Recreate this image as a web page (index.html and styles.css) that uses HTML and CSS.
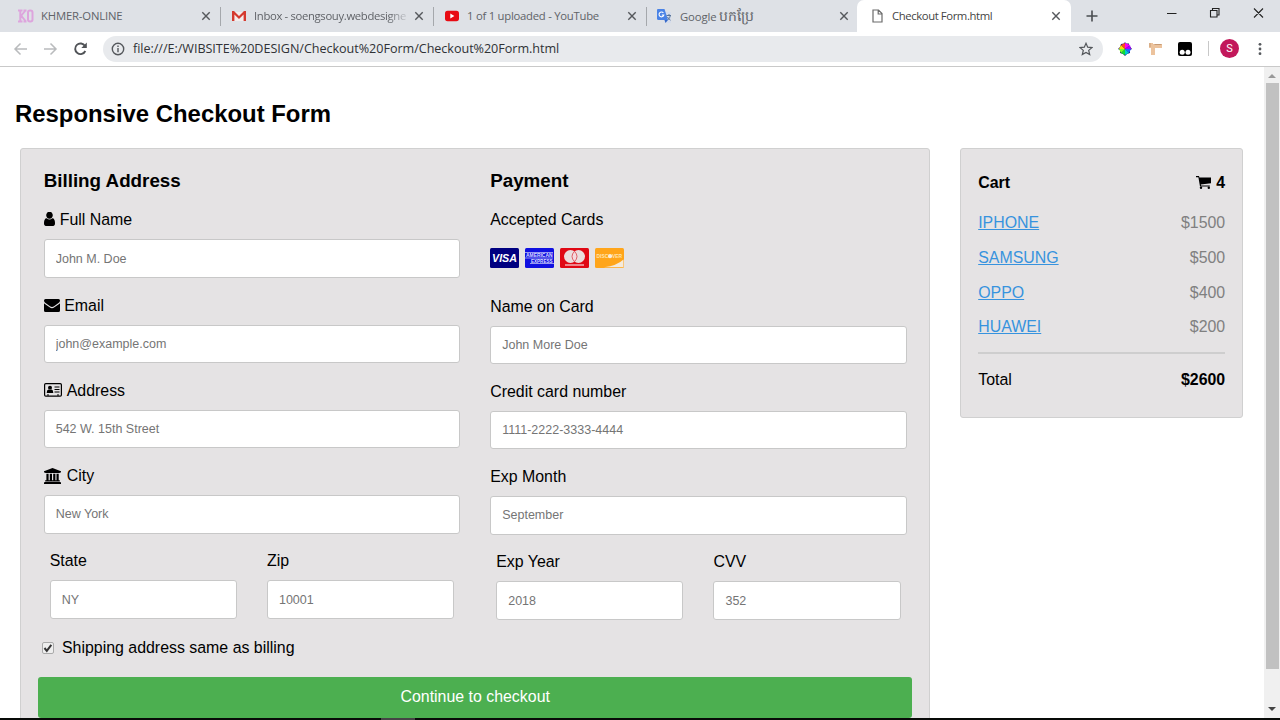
FILE: index.html
```
<!DOCTYPE html>
<html lang="en">
<head>
<meta charset="utf-8">
<title>Checkout Form.html</title>
<link rel="stylesheet" href="styles.css">
</head>
<body>
<div class="window">
  <header class="tabs">
    <div class="tab tab-1"><svg class="fav" width="16" height="16" viewBox="0 0 16 16"><g fill="none" stroke="#dda5dd" stroke-width="2"><path d="M0 2.500h4.500M0 13.500h4.500M2.300 2v12M5.500 2.500h3M5.500 13.500h3M3 8l4-5M3.500 8l4 5"/><rect x="10" y="2.500" width="4.500" height="11" rx="2"/></g></svg><span class="tab-title t1">KHMER-ONLINE</span><svg class="close" viewBox="0 0 10 10"><path d="M1.300 1.300l7.400 7.400M8.700 1.300L1.300 8.700"/></svg></div>
    <div class="tab tab-2"><svg class="fav" width="14" height="16" viewBox="0 0 14 16"><path fill="#f3eded" d="M1 4h12v9H1z"/><path fill="#d43a2f" d="M0 3h2l5 5 5-5h2v10h-2.400V6.400L7 11 2.400 6.400V13H0z"/></svg><span class="tab-title t2 fade">Inbox - soengsouy.webdesigne</span><svg class="close" viewBox="0 0 10 10"><path d="M1.300 1.300l7.400 7.400M8.700 1.300L1.300 8.700"/></svg></div>
    <div class="tab tab-3"><svg class="fav" width="14" height="16" viewBox="0 0 14 16"><rect y="2.700" width="14" height="10.500" rx="2.600" fill="#e80b13"/><path fill="#fff" d="M5.300 5.600v4.800L9.400 8z"/></svg><span class="tab-title t3">1 of 1 uploaded - YouTube</span><svg class="close" viewBox="0 0 10 10"><path d="M1.300 1.300l7.400 7.400M8.700 1.300L1.300 8.700"/></svg></div>
    <div class="tab tab-4"><svg class="fav" width="15" height="16" viewBox="0 0 15 16"><path fill="#d5dceb" d="M6 4h8v11H8z"/><path fill="#4a83e6" d="M1 1h6.500L11 12H1.500Q0 12 0 10.500V2q0-1 1-1z"/><path fill="#3367c9" d="M7.500 12H11l-2.500 3z"/><path d="M6.400 5A2.400 2.400 0 1 0 6.800 7H4.800" fill="none" stroke="#fff" stroke-width="1.100"/><path d="M9.500 7.500h4.500M12 6v1.500M13.200 8c-.5 2-1.500 3-2.400 4M10.500 9c1 1.800 2 2.500 3 3.200" fill="none" stroke="#5b7699"/></svg><span class="tab-title t4">Google <span class="khmer">បកប្រែ</span></span><svg class="close" viewBox="0 0 10 10"><path d="M1.300 1.300l7.400 7.400M8.700 1.300L1.300 8.700"/></svg></div>
    <div class="tab tab-5"><svg class="fav" width="11" height="16" viewBox="0 0 11 16"><path d="M1 2h5.500L10 5.500V14H1zM6.200 2v4H10" fill="#fff" stroke="#6b6b6b" stroke-width="1.200"/></svg><span class="tab-title t5">Checkout Form.html</span><svg class="close" viewBox="0 0 10 10"><path d="M1.300 1.300l7.400 7.400M8.700 1.300L1.300 8.700"/></svg></div>
    <svg class="plus" width="12" height="12" viewBox="0 0 12 12"><path d="M6 .5v11M.5 6h11" stroke="#4a4d51" stroke-width="1.600"/></svg>
    <svg class="controls" width="98" height="12" viewBox="0 0 98 12" fill="none" stroke="#222" stroke-width="1.100"><path d="M1 6.500h9.500M44.500 3.500h6.500v6.500h-6.500zM46.500 3.500v-2h6.500v6.500h-2M88 1.500l9 9M97 1.500l-9 9"/></svg>
  </header>
  <nav class="toolbar">
    <svg class="nav-icons" width="78" height="16" viewBox="0 0 78 16" fill="none" stroke-width="1.500"><g stroke="#b9bbbd"><path d="M14 8H2.500M7.500 2.500L2 8l5.500 5.500M31 8h11.500M37.500 2.500L43 8l-5.500 5.500"/></g><path d="M72 5A5.300 5.300 0 1 0 72.300 10" stroke="#505357" stroke-width="1.900"/><path d="M73.800 1.500v5.500h-5.500z" fill="#505357"/></svg>
    <div class="address">
      <svg width="14" height="14" viewBox="0 0 14 14"><circle cx="7" cy="7" r="5.700" fill="none" stroke="#55585c" stroke-width="1.400"/><path d="M7 6v4.200M7 3.600v1.400" stroke="#55585c" stroke-width="1.400"/></svg>
      <span class="url">file:///E:/WIBSITE%20DESIGN/Checkout%20Form/Checkout%20Form.html</span>
      <svg class="star" width="14" height="14" viewBox="0 0 14 14"><path d="M7 1.300l1.700 3.900 4.200.4-3.200 2.800 1 4.200L7 10.400l-3.700 2.200 1-4.200L1.100 5.600l4.200-.4z" fill="none" stroke="#53565a" stroke-width="1.200"/></svg>
    </div>
    <svg class="ext wheel" width="14" height="14" viewBox="0 0 14 14"><path fill="#181878" d="M7 0l1 1.500h3v2l3 3.500-2 1v3l-3 1-2 2-2-2-3-1V8L0 7l2-2 1-3 3-.5z"/><path fill="#f0e" d="M7 7L7 1l5 2z"/><path fill="#a0f" d="M7 7l5-4 1 4z"/><path fill="#26f" d="M7 7h6l-2 4z"/><path fill="#0cc" d="M7 7l4 4-4 2z"/><path fill="#1d3" d="M7 7v6l-4-2z"/><path fill="#7f2" d="M7 7l-4 4-2-4z"/><path fill="#fd0" d="M7 7H1l2-4z"/><path fill="#f42" d="M7 7L3 3l4-2z"/></svg>
    <svg class="ext square" width="13" height="12" viewBox="0 0 13 12"><path fill="#ecc39d" d="M0 0h4v1h9v4H6v7H2V5H0z"/><path d="M1 0v4M5.500 1.500h7" stroke="#c79b75" fill="none"/></svg>
    <svg class="ext monkey" width="14" height="14" viewBox="0 0 14 14"><rect width="14" height="14" rx="2"/><circle cx="4.200" cy="10.300" r="2.500" fill="#fff"/><circle cx="10" cy="10.300" r="2.500" fill="#fff"/></svg>
    <span class="divider"></span><span class="avatar">S</span>
    <svg class="dots" width="4" height="14" viewBox="0 0 4 14" fill="#55585c"><circle cx="2" cy="2.300" r="1.400"/><circle cx="2" cy="7" r="1.400"/><circle cx="2" cy="11.700" r="1.400"/></svg>
  </nav>
  <div class="viewport">
    <main class="page">
      <h1>Responsive Checkout Form</h1>
      <div class="content">
        <form class="panel checkout">
          <div class="columns">
            <section class="column">
              <h2>Billing Address</h2>
              <div class="field"><label><svg class="user" width="11" height="14" viewBox="0 160 1280 1504" preserveAspectRatio="none"><path d="M1280 1399q0 109-62.500 187t-150.500 78h-854q-88 0-150.500-78t-62.500-187q0-85 8.500-160.500t31.500-152t58.500-131t94-89t134.500-34.500q131 128 313 128t313-128q76 0 134.500 34.500t94 89t58.500 131t31.500 152t8.500 160.500zM1024 512q0 159-112.500 271.500t-271.500 112.500t-271.500-112.500t-112.500-271.500t112.500-271.500t271.500-112.500t271.500 112.500t112.500 271.500z"/></svg><span>Full Name</span></label><input type="text" placeholder="John M. Doe"></div>
              <div class="field"><label class="mail"><svg width="16" height="13" viewBox="0 0 16 13"><path d="M0 1.500Q0 0 1.500 0h13Q16 0 16 1.500 16 3 14.500 4L10 7.200Q8 8.700 6 7.200L1.500 4Q0 3 0 1.500zM0 4.200q.5.500 1.200 1L5.600 8.300q2.400 1.700 4.800 0l4.400-3.100q.7-.5 1.200-1v7.300q0 1.500-1.500 1.500h-13Q0 13 0 11.500z"/></svg><span>Email</span></label><input type="text" placeholder="john@example.com"></div>
              <div class="field"><label><svg width="18" height="14" viewBox="0 0 18 14"><rect x=".6" y=".6" width="16.800" height="12.500" rx="1.200" fill="none" stroke="#000" stroke-width="1.200"/><circle cx="6" cy="4.800" r="2"/><path d="M2.700 10q0-3 1.800-3.400 1.500 1 3 0Q9.300 7 9.300 10z"/><path d="M10.500 4h5M10.500 6.500h5M10.500 9h5M3 12h2M13 12h2" stroke="#000" stroke-width="1.100"/></svg><span>Address</span></label><input type="text" placeholder="542 W. 15th Street"></div>
              <div class="field"><label class="city"><svg width="17" height="16" viewBox="0 0 17 16"><path d="M8.500 0L17 3.300v1.200h-1.200v.6H1.200v-.6H0V3.300zM2.400 5.700h2.200v6.600h1.200V5.700H8v6.600h1.200V5.700h2.200v6.600h1.100V5.700h2.200v6.600h1.100v1.200H1.200v-1.200h1.200zM.6 14h15.800l.6.700V16H0v-1.300z"/></svg><span>City</span></label><input type="text" placeholder="New York"></div>
              <div class="pair"><div class="field"><label>State</label><input type="text" placeholder="NY"></div><div class="field"><label>Zip</label><input type="text" placeholder="10001"></div></div>
            </section>
            <section class="column">
              <h2>Payment</h2>
              <div class="accepted"><label>Accepted Cards</label>
                <div class="cards">
                  <svg viewBox="0 0 29 20"><rect width="29" height="20" rx="1.500" fill="#000080"/><text class="visa" x="2" y="14.300" textLength="25" lengthAdjust="spacingAndGlyphs">VISA</text></svg>
                  <svg viewBox="0 0 29 20"><rect width="29" height="20" rx="1.500" fill="#1010e0"/><text class="amex" x="1" y="9.300" textLength="26.500" lengthAdjust="spacingAndGlyphs">AMERICAN</text><text class="amex" x="6" y="15" textLength="21.500" lengthAdjust="spacingAndGlyphs">EXPRESS</text><path d="M0 4.500h28M0 10h28M5 15.500h24" stroke="#d4d4f8" stroke-width=".7"/></svg>
                  <svg viewBox="0 0 29 20"><rect width="29" height="20" rx="1.500" fill="#e00814"/><circle cx="10.500" cy="8.500" r="6.500" fill="#eadede"/><circle cx="18.500" cy="8.500" r="6.500" fill="#eadede"/><path d="M14.500 3.300q-5 5.200 0 10.400 5-5.200 0-10.400z" fill="#f5d8dc" stroke="#d9404a" stroke-width=".8"/><path d="M5 17h19" stroke="#f3aeb3" stroke-width="1.500"/></svg>
                  <svg viewBox="0 0 29 20"><rect width="29" height="20" rx="1.500" fill="#ffa51a"/><path d="M28.500 11.500v7.700H9q13-1.500 19.500-7.700z" fill="#f4eadc"/><text class="disc" x="1.500" y="10" textLength="25.500" lengthAdjust="spacingAndGlyphs">DISCOVER</text><circle cx="15" cy="8.200" r="2" fill="#f9eddb"/></svg>
                </div>
              </div>
              <div class="field"><label>Name on Card</label><input type="text" placeholder="John More Doe"></div>
              <div class="field"><label>Credit card number</label><input type="text" placeholder="1111-2222-3333-4444"></div>
              <div class="field"><label>Exp Month</label><input type="text" placeholder="September"></div>
              <div class="pair"><div class="field"><label>Exp Year</label><input type="text" placeholder="2018"></div><div class="field"><label>CVV</label><input type="text" placeholder="352"></div></div>
            </section>
          </div>
          <label class="same"><svg width="12" height="12" viewBox="0 0 12 12"><rect x=".5" y=".5" width="11" height="11" rx="1.500" fill="#eee" stroke="#aaa"/><path d="M2.500 6l2.300 2.800L9.300 2.800" fill="none" stroke="#333" stroke-width="2"/></svg><span>Shipping address same as billing</span></label>
          <button type="button" class="submit">Continue to checkout</button>
        </form>
        <aside class="panel cart">
          <div class="row head"><b>Cart</b><b class="count"><svg width="15" height="13" viewBox="0 0 15 13"><path d="M0 0h3l.4 1.500H15V7.200L4.800 8.500l.2 1h8.800v1H4L2.400 1.200H0z"/><circle cx="5" cy="11.800" r="1.200"/><circle cx="12.800" cy="11.800" r="1.200"/></svg>4</b></div>
          <div class="row"><a href="#">IPHONE</a><span>$1500</span></div>
          <div class="row"><a href="#">SAMSUNG</a><span>$500</span></div>
          <div class="row"><a href="#">OPPO</a><span>$400</span></div>
          <div class="row"><a href="#">HUAWEI</a><span>$200</span></div>
          <hr>
          <div class="row total"><span>Total</span><b>$2600</b></div>
        </aside>
      </div>
    </main>
    <div class="scrollbar"><svg width="8" height="4" viewBox="0 0 8 4"><path d="M0 4l4-4 4 4z" fill="#999"/></svg><div class="thumb"></div><svg class="down" width="8" height="4" viewBox="0 0 8 4"><path d="M0 0h8L4 4z" fill="#444"/></svg></div>
  </div>
  <footer class="taskbar"><div class="task"></div></footer>
</div>
</body>
</html>
```
FILE: styles.css
```
* { box-sizing: border-box; }
body { margin: 0; overflow: hidden; background: #fff; color: #000; font: 15.92px/19px "Liberation Sans", sans-serif; }
svg { display: block; flex: none; }
.window { width: 1280px; height: 720px; display: flex; flex-direction: column; overflow: hidden; }
.tabs { height: 32px; flex: none; display: flex; background: #dee1e6; }
.tab { display: flex; align-items: center; height: 32px; font: 11.3px/16px "Open Sans", "Noto Sans", sans-serif; color: #606368; white-space: nowrap; }
.tab-1 { width: 220px; padding: 0 9px 0 18px; gap: 7px; }
.tab-2 { width: 213px; padding: 0 9px 0 12px; gap: 8px; }
.tab-3 { width: 213px; padding: 0 9px 0 12px; gap: 8px; }
.tab-4 { width: 211px; padding: 0 8px 0 11px; gap: 8px; }
.tab-2, .tab-3, .tab-4 { background: linear-gradient(#a5a8ac, #a5a8ac) 0 7px / 1px 19px no-repeat; }
.tab-5 { width: 214px; padding: 0 10px 0 15px; gap: 9px; background: #fff; border-radius: 7px 7px 0 0; color: #444; }
.tab-title { flex: 1; min-width: 0; }
.t1 { letter-spacing: -.17px; }
.t2 { letter-spacing: -.34px; }
.t3 { letter-spacing: -.25px; }
.t4 { letter-spacing: -.1px; }
.t5 { letter-spacing: -.4px; }
.khmer { letter-spacing: 0; font-size: 14px; line-height: 16px; }
.fade { -webkit-mask-image: linear-gradient(90deg, #000 88%, rgba(0,0,0,.2)); mask-image: linear-gradient(90deg, #000 88%, rgba(0,0,0,.2)); }
.close { width: 10px; height: 10px; stroke: #55585c; stroke-width: 1.4; }
.plus { margin: 10px 0 0 15px; }
.controls { margin: 7px 0 0 68px; }
.toolbar { height: 35px; flex: none; display: flex; align-items: center; padding: 0 0 1px 13px; border-bottom: 1px solid #c9c9c9; }
.address { width: 1000px; height: 26px; margin-left: 12px; padding: 0 10px 0 8px; border-radius: 13px; background: #e8eaed; display: flex; align-items: center; }
.url { margin-left: 8px; flex: 1; font: 12.6px/18px "Open Sans", "Noto Sans", sans-serif; letter-spacing: -.04px; color: #303236; }
.ext.wheel { margin-left: 15px; }
.ext.square { margin-left: 17px; }
.ext.monkey { margin-left: 16px; }
.divider { width: 1px; height: 15px; margin-left: 16px; background: #c8c8c8; }
.avatar { width: 19px; height: 19px; margin-left: 11px; border-radius: 50%; background: #c2185b; color: #fff; font: 11px/19px Roboto, sans-serif; text-align: center; }
.dots { margin-left: 19px; }
.viewport { flex: 1; min-height: 0; display: flex; overflow: hidden; }
.page { width: 1264px; padding: 31px 0 0 15px; }
h1 { margin: 0; font-size: 23.9px; line-height: 32px; height: 50.3px; white-space: nowrap; }
.content { display: flex; align-items: flex-start; gap: 30px; margin-left: 5.2px; }
.panel { background: #e5e3e4; border: 1px solid #d0d0d0; border-radius: 3px; }
.checkout { width: 910px; height: 600px; padding: 20px 17px 0; }
.columns { display: flex; gap: 30px; height: 468.7px; padding: 0 5.5px; }
.column { flex: 1; min-width: 0; }
h2 { margin: 0 0 18px; font-size: 18.8px; line-height: 23px; }
.field { height: 85.3px; }
.field label { display: flex; align-items: center; gap: 5px; height: 19px; margin-bottom: 10px; }
.field .mail { gap: 4.5px; }
.field .city { gap: 6px; }
.user { margin-top: -2px; }
.field input { display: block; width: 100%; height: 38.5px; padding: 0 11px; border: 1px solid #c8c8c8; border-radius: 3px; background: #fff; font: 12.5px "Liberation Sans", sans-serif; }
.field input::placeholder { color: #757575; }
.pair { display: flex; gap: 30px; padding: 0 6px; }
.pair .field { flex: 1; min-width: 0; }
.accepted { height: 86.3px; }
.accepted label { display: block; height: 38px; }
.cards { display: flex; gap: 6px; }
.cards svg { width: 29px; height: 20px; }
.visa { font: italic bold 11px "Liberation Sans", sans-serif; fill: #fff; }
.amex { font: bold 5px "Liberation Sans", sans-serif; fill: #dcdcff; }
.disc { font: bold 5px "Liberation Sans", sans-serif; fill: #ffe4b0; }
.same { display: flex; align-items: center; gap: 8px; margin-left: 3.8px; height: 20px; }
.submit { display: block; width: 100%; height: 41px; margin-top: 19px; padding: 0; border: 0; border-radius: 3px; background: #4caf50; color: #fff; font: 15.92px "Liberation Sans", sans-serif; }
.cart { width: 283px; height: 270px; padding: 24px 17px 0; }
.row { display: flex; justify-content: space-between; height: 34.7px; color: #808080; }
.head { height: 40px; color: #000; }
.count { display: flex; align-items: center; gap: 5px; height: 19px; }
.row a { color: #3793de; }
hr { height: 2px; margin: 0; border: 0; background: #cecece; }
.total { padding-top: 15.5px; color: #000; }
.scrollbar { width: 16px; display: flex; flex-direction: column; align-items: center; background: #f0f0f0; padding-top: 7px; }
.thumb { width: 13px; height: 586px; margin-top: 5px; background: #c1c1c1; }
.down { margin-top: 38px; }
.taskbar { height: 2px; flex: none; background: #080a08; }
.task { width: 34px; height: 2px; margin-left: 381px; background: #454545; }
```
